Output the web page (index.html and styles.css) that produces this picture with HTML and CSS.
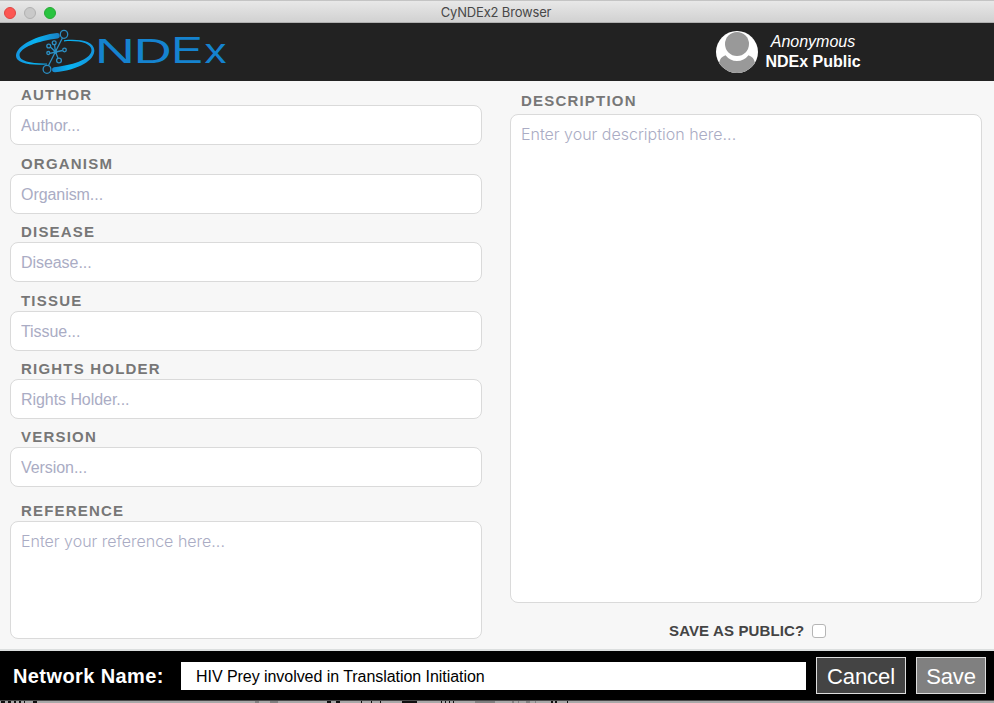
FILE: index.html
```html
<!DOCTYPE html>
<html lang="en">
<head>
<meta charset="utf-8">
<title>CyNDEx2 Browser</title>
<link rel="stylesheet" href="styles.css">
</head>
<body>
<div class="window">
  <div class="titlebar">
    <div class="lights"><i class="light red"></i><i class="light gray"></i><i class="light green"></i></div>
    <span class="window-title">CyNDEx2 Browser</span>
  </div>
  <header class="header">
    <svg class="logo" width="216" height="50" viewBox="0 0 216 50">
      <defs>
        <linearGradient id="blue" x1="0" y1="0" x2="1" y2="0">
          <stop offset="0" stop-color="#1593dc"/><stop offset=".45" stop-color="#08b4f2"/><stop offset="1" stop-color="#1a7fc4"/>
        </linearGradient>
        <linearGradient id="blue2" x1="0" y1="0" x2="1" y2="0">
          <stop offset="0" stop-color="#1a86cc"/><stop offset=".4" stop-color="#08b4f2"/><stop offset="1" stop-color="#1593dc"/>
        </linearGradient>
      </defs>
      <path fill="url(#blue)" d="M46 7C27 9 5 19 5 30C5 37 18 39.500 36 38.400L36 37.400C21 37.800 8.500 35.500 8.500 29.300C8.500 22 27 14.800 46.500 12.600Q49 12 48.700 9.300Q48.300 6.800 46 7Z"/>
      <path fill="url(#blue2)" d="M53 15.400C68 14 80.500 17.500 80.500 24C80.500 32 66 38.500 43 41.200Q40.700 41.800 41 44.200Q41.300 46.300 44 46.200C68 44 84 34 83.300 24C82.500 15 69 12.800 53 14.200Z"/>
      <g fill="none" stroke="#2b8fc4" stroke-width="1.300">
        <path d="M51.500 11.700L37.500 39.500M44.500 26L39.500 21M44.500 26L43.500 18.500M44.500 26L51.500 24.500M44.500 26L39 27.300M44.500 26L47 32"/>
        <ellipse cx="53" cy="8.300" rx="3.700" ry="4"/><ellipse cx="36" cy="43.300" rx="3.900" ry="4"/>
        <circle cx="37.700" cy="20" r="1.900"/><circle cx="43.200" cy="16.800" r="1.900"/><circle cx="53.500" cy="24" r="1.800"/>
        <circle cx="37.300" cy="27" r="1.500"/><circle cx="48" cy="34.500" r="2.400"/>
      </g>
      <circle cx="44.500" cy="26" r="1.900" fill="#2b8fc4"/>
      <g class="wordmark">
        <text transform="translate(83.700 37) scale(1.550 1)">N</text>
        <text transform="translate(122.700 37) scale(1.455 1)">D</text>
        <text transform="translate(160.200 37) scale(1.310 1)">E</text>
        <text transform="translate(193.600 37) scale(1.220 1)">x</text>
      </g>
    </svg>
    <div class="account">
      <svg width="42" height="42" viewBox="0 0 42 42">
        <clipPath id="disc"><circle cx="21" cy="21" r="21"/></clipPath>
        <g clip-path="url(#disc)">
          <rect width="42" height="42" fill="#fff"/>
          <circle cx="21" cy="13" r="12" fill="#999"/>
          <path fill="#999" d="M3 42V32Q4 26 9.500 24.200Q14 30 21 30Q28 30 32.500 24.200Q38 26 39 32V42Z"/>
        </g>
      </svg>
      <div class="account-text"><em>Anonymous</em><strong>NDEx Public</strong></div>
    </div>
  </header>
  <main class="content">
    <section class="column left">
      <label class="field"><span>AUTHOR</span><input placeholder="Author..."></label>
      <label class="field"><span>ORGANISM</span><input placeholder="Organism..."></label>
      <label class="field"><span>DISEASE</span><input placeholder="Disease..."></label>
      <label class="field"><span>TISSUE</span><input placeholder="Tissue..."></label>
      <label class="field"><span>RIGHTS HOLDER</span><input placeholder="Rights Holder..."></label>
      <label class="field"><span>VERSION</span><input placeholder="Version..."></label>
      <label class="field reference"><span>REFERENCE</span><textarea placeholder="Enter your reference here..."></textarea></label>
    </section>
    <section class="column right">
      <label class="field description"><span>DESCRIPTION</span><textarea placeholder="Enter your description here..."></textarea></label>
      <label class="public"><span>SAVE AS PUBLIC?</span><i class="checkbox"></i></label>
    </section>
  </main>
  <footer class="footer">
    <span class="network-label">Network Name:</span>
    <input class="network-name" value="HIV Prey involved in Translation Initiation">
    <button class="btn cancel">Cancel</button>
    <button class="btn save">Save</button>
  </footer>
</div>
<svg class="desktop-edge" width="994" height="3" viewBox="0 0 994 3">
  <rect width="994" height="3" fill="#a8a8a8"/>
  <rect width="994" height="1" fill="#4a4a4a"/>
  <path fill="none" stroke="#111" stroke-width="2" d="M1 2h4M8 2h3M14 2h2M19 2h2M24 2h1M33 2h4M327 2h4M336 2h4M361 2h1M371 2h1M380 2h1M402 2h15M441 2h1M445 2h1M449 2h1M453 2h1M551 2h2M555 2h2M567 2h1"/>
  <path fill="none" stroke="#808080" stroke-width="2" d="M255 2h4M270 2h8M475 2h20M512 2h2M518 2h1M526 2h4M535 2h1"/>
</svg>
</body>
</html>
```
FILE: styles.css
```css
* { box-sizing: border-box; }
body { margin: 0; width: 994px; height: 703px; overflow: hidden; background: #f7f7f7; font-family: "Liberation Sans", Arial, sans-serif; }
.window { height: 700px; display: flex; flex-direction: column; }
.titlebar { height: 23px; flex: none; display: grid; grid-template-columns: 1fr auto 1fr; align-items: center; padding-top: 2px; background: linear-gradient(#c4c4c4 0, #c4c4c4 1px, #e8e8e8 1px, #d1d1d1 22px, #b0b0b0 22px); }
.lights { display: flex; gap: 8px; padding-left: 4px; }
.light { width: 12px; height: 12px; border-radius: 50%; border: 1px solid; }
.red { background: #fc5753; border-color: #df4744; }
.gray { background: #c9c9c9; border-color: #b1b1b1; }
.green { background: #29c33f; border-color: #27aa35; }
.window-title { font: 13px/16px Inter, sans-serif; color: #484848; letter-spacing: -.17px; margin: -1px 2px 0 0; }
.header { height: 58px; flex: none; background: #222; display: flex; justify-content: space-between; padding: 0 133px 0 11px; align-items: flex-start; }
.logo { margin-top: 3px; }
.wordmark { font: 36px "Liberation Sans", sans-serif; fill: #1583cf; }
.account { display: flex; gap: 7px; padding-top: 8px; color: #fff; font-size: 16px; line-height: 20px; }
.account svg { display: block; }
.account-text { width: 96px; padding-top: 1px; display: flex; flex-direction: column; align-items: center; white-space: nowrap; }
.content { height: 568px; flex: none; display: grid; grid-template-columns: 472px 472px; gap: 28px; padding: 0 10px; }
.left { display: grid; grid-template-rows: 69px 68px 69px 68px 68px 71px 1fr; padding-top: 6px; }
.field { display: flex; flex-direction: column; }
.field span { height: 18px; line-height: 16px; padding-left: 11px; font-size: 15px; font-weight: bold; letter-spacing: 1.2px; color: #777; }
input, textarea { font: 16px "Liberation Sans", sans-serif; outline: none; resize: none; margin: 0; }
.field input { height: 40px; letter-spacing: -.06px; }
.field input, .field textarea { width: 472px; border: 1px solid #dadada; border-radius: 8px; background: #fff; padding: 2px 10px 0; }
.field textarea { padding-top: 9px; font: 300 16px/20px Inter, sans-serif; }
::placeholder { color: #aaacc4; opacity: 1; }
.reference { padding-top: 3px; }
.reference textarea { height: 118px; }
.description { padding-top: 12px; }
.description span { height: 21px; }
.description textarea { height: 489px; }
.public { display: flex; align-items: center; gap: 8px; margin: 19px 0 0 159px; font-size: 15px; font-weight: bold; letter-spacing: .13px; color: #444; }
.checkbox { width: 14px; height: 14px; border: 1px solid #b5b5b5; border-radius: 3px; background: #fff; }
.footer { height: 51px; flex: none; background: #000; border-top: 2px solid #dcdfdf; display: flex; align-items: center; padding: 0 8px 0 13px; }
.network-label { width: 168px; padding-top: 2px; color: #fff; font-size: 20px; font-weight: bold; letter-spacing: .4px; }
.network-name { width: 625px; height: 28px; border: 0; padding: 3px 15px 0; background: #fff; color: #000; letter-spacing: -.05px; }
.btn { height: 37px; padding: 2px 0 0; border: 1px solid #ddd; color: #fff; font: 22px "Liberation Sans", sans-serif; margin-left: 10px; letter-spacing: -.1px; }
.cancel { width: 90px; background: #444; }
.save { width: 70px; background: #808080; }
.desktop-edge { display: block; }
```
